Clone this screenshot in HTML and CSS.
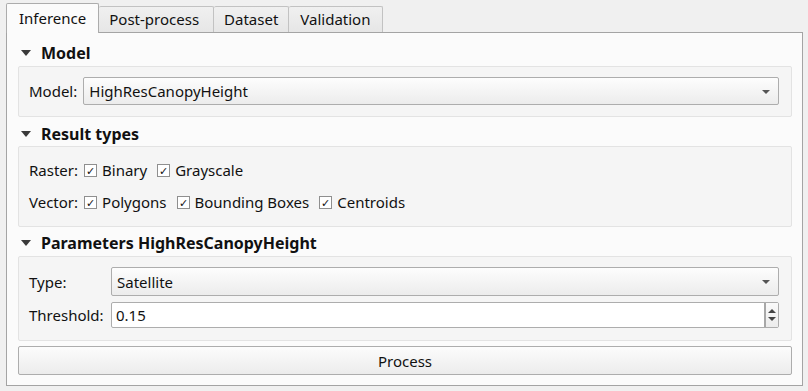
FILE: index.html
```html
<!DOCTYPE html>
<html lang="en">
<head>
  <meta charset="UTF-8" />
  <title>Inference</title>
  <link rel="stylesheet" href="styles.css">
</head>
<body>
  <div class="tabs">
    <div class="tab active">Inference</div>
    <div class="tab">Post-process</div>
    <div class="tab">Dataset</div>
    <div class="tab">Validation</div>
  </div>

  <div class="pane">
    <div class="section-head head-model"><span class="caret"></span>Model</div>
    <div class="group group-model">
      <div class="row">
        <span class="label">Model:</span>
        <div class="combo">HighResCanopyHeight<span class="drop"></span></div>
      </div>
    </div>

    <div class="section-head head-results"><span class="caret"></span>Result types</div>
    <div class="group group-results">
      <div class="row check-row">
        <span class="label">Raster:</span>
        <label class="check"><span class="box">&#10003;</span>Binary</label>
        <label class="check"><span class="box">&#10003;</span>Grayscale</label>
      </div>
      <div class="row check-row">
        <span class="label">Vector:</span>
        <label class="check"><span class="box">&#10003;</span>Polygons</label>
        <label class="check"><span class="box">&#10003;</span>Bounding Boxes</label>
        <label class="check"><span class="box">&#10003;</span>Centroids</label>
      </div>
    </div>

    <div class="section-head head-params"><span class="caret"></span>Parameters HighResCanopyHeight</div>
    <div class="group group-params">
      <div class="row">
        <span class="label wide">Type:</span>
        <div class="combo">Satellite<span class="drop"></span></div>
      </div>
      <div class="row">
        <span class="label wide">Threshold:</span>
        <div class="spin">
          <span class="value">0.15</span>
          <span class="arrows"><span class="up"></span><span class="down"></span></span>
        </div>
      </div>
    </div>

    <button class="process">Process</button>
  </div>
</body>
</html>
```

FILE: styles.css
```css
* {
  box-sizing: border-box;
}
body {
  margin: 0;
  background: #f0f0f0;
  font-family: "Noto Sans", "Open Sans", sans-serif;
  font-size: 15px;
  color: #111;
}
.tabs {
  display: flex;
  align-items: flex-end;
  height: 32px;
  padding: 3px 0 0 6px;
  position: relative;
  z-index: 1;
}
.tab {
  height: 26px;
  padding: 0 12px;
  border: 1px solid #c2c2c2;
  border-bottom: none;
  border-left: none;
  border-radius: 2px 2px 0 0;
  background: linear-gradient(#f0f0f0, #e6e6e6);
  display: flex;
  align-items: center;
  line-height: 1;
}
.tab.active {
  height: 30px;
  padding: 0 12px;
  border-left: 1px solid #acacac;
  border-color: #acacac;
  background: #fbfbfb;
  margin-bottom: -1px;
}
.tab:nth-child(2) { padding: 0 14px 0 10px; }
.tab:nth-child(3) { padding: 0 10px; }
.tab:nth-child(4) { padding: 0 12px 0 11px; }
.pane {
  margin: 0 5px 0 6px;
  height: 354px;
  border: 1px solid #a4a4a4;
  background: #fbfbfb;
  padding: 11px 10px 0 11px;
  display: flex;
  flex-direction: column;
}
.section-head {
  height: 18px;
  display: flex;
  align-items: center;
  font-weight: bold;
  font-size: 16px;
  padding-left: 3px;
}
.caret {
  width: 0;
  height: 0;
  border-left: 5px solid transparent;
  border-right: 5px solid transparent;
  border-top: 6px solid #3a3a3a;
  margin-right: 10px;
}
.head-results { margin-top: 8px; }
.head-params { margin-top: 7px; }
.group {
  border: 1px solid #e3e3e3;
  border-radius: 2px;
  background: #f5f5f5;
  margin-top: 4px;
  padding: 10px 12px 11px 10px;
  display: flex;
  flex-direction: column;
}
.group-results { padding-top: 11px; padding-bottom: 12px; gap: 8px; margin-top: 3px; }
.group-params { padding-bottom: 12px; gap: 6px; margin-top: 4px; }
.row {
  display: flex;
  align-items: center;
}
.check-row { height: 24px; }
.label {
  margin-right: 6px;
}
.label.wide {
  width: 82px;
  margin-right: 0;
}
.combo {
  flex: 1;
  height: 28px;
  border: 1px solid #adadad;
  border-radius: 2px;
  background: linear-gradient(#fdfdfd, #ececec);
  display: flex;
  align-items: center;
  padding-left: 5px;
  position: relative;
}
.group-params .combo { height: 29px; }
.drop {
  position: absolute;
  right: 8px;
  top: 12px;
  border-left: 4px solid transparent;
  border-right: 4px solid transparent;
  border-top: 4px solid #555;
}
.spin {
  flex: 1;
  height: 26px;
  border: 1px solid #adadad;
  border-radius: 2px;
  background: #fff;
  display: flex;
  align-items: center;
}
.spin .value {
  flex: 1;
  padding-left: 4px;
}
.arrows {
  width: 14px;
  height: 24px;
  border-left: 2px solid #a8a8a8;
  background: linear-gradient(#fafafa, #ececec);
  display: flex;
  flex-direction: column;
  align-items: center;
  justify-content: center;
  gap: 4px;
}
.up {
  border-left: 4px solid transparent;
  border-right: 4px solid transparent;
  border-bottom: 4px solid #444;
}
.down {
  border-left: 4px solid transparent;
  border-right: 4px solid transparent;
  border-top: 4px solid #444;
}
.check {
  display: flex;
  align-items: center;
  margin-right: 10px;
}
.box {
  width: 13px;
  height: 13px;
  border: 1px solid #8f8f8f;
  background: #fff;
  font-size: 11px;
  line-height: 11px;
  text-align: center;
  margin-right: 5px;
}
.process {
  margin-top: 5px;
  height: 29px;
  border: 1px solid #adadad;
  border-radius: 2px;
  background: linear-gradient(#fcfcfc, #ececec);
  font-family: inherit;
  font-size: 15px;
  color: #111;
  padding: 0;
}
```
